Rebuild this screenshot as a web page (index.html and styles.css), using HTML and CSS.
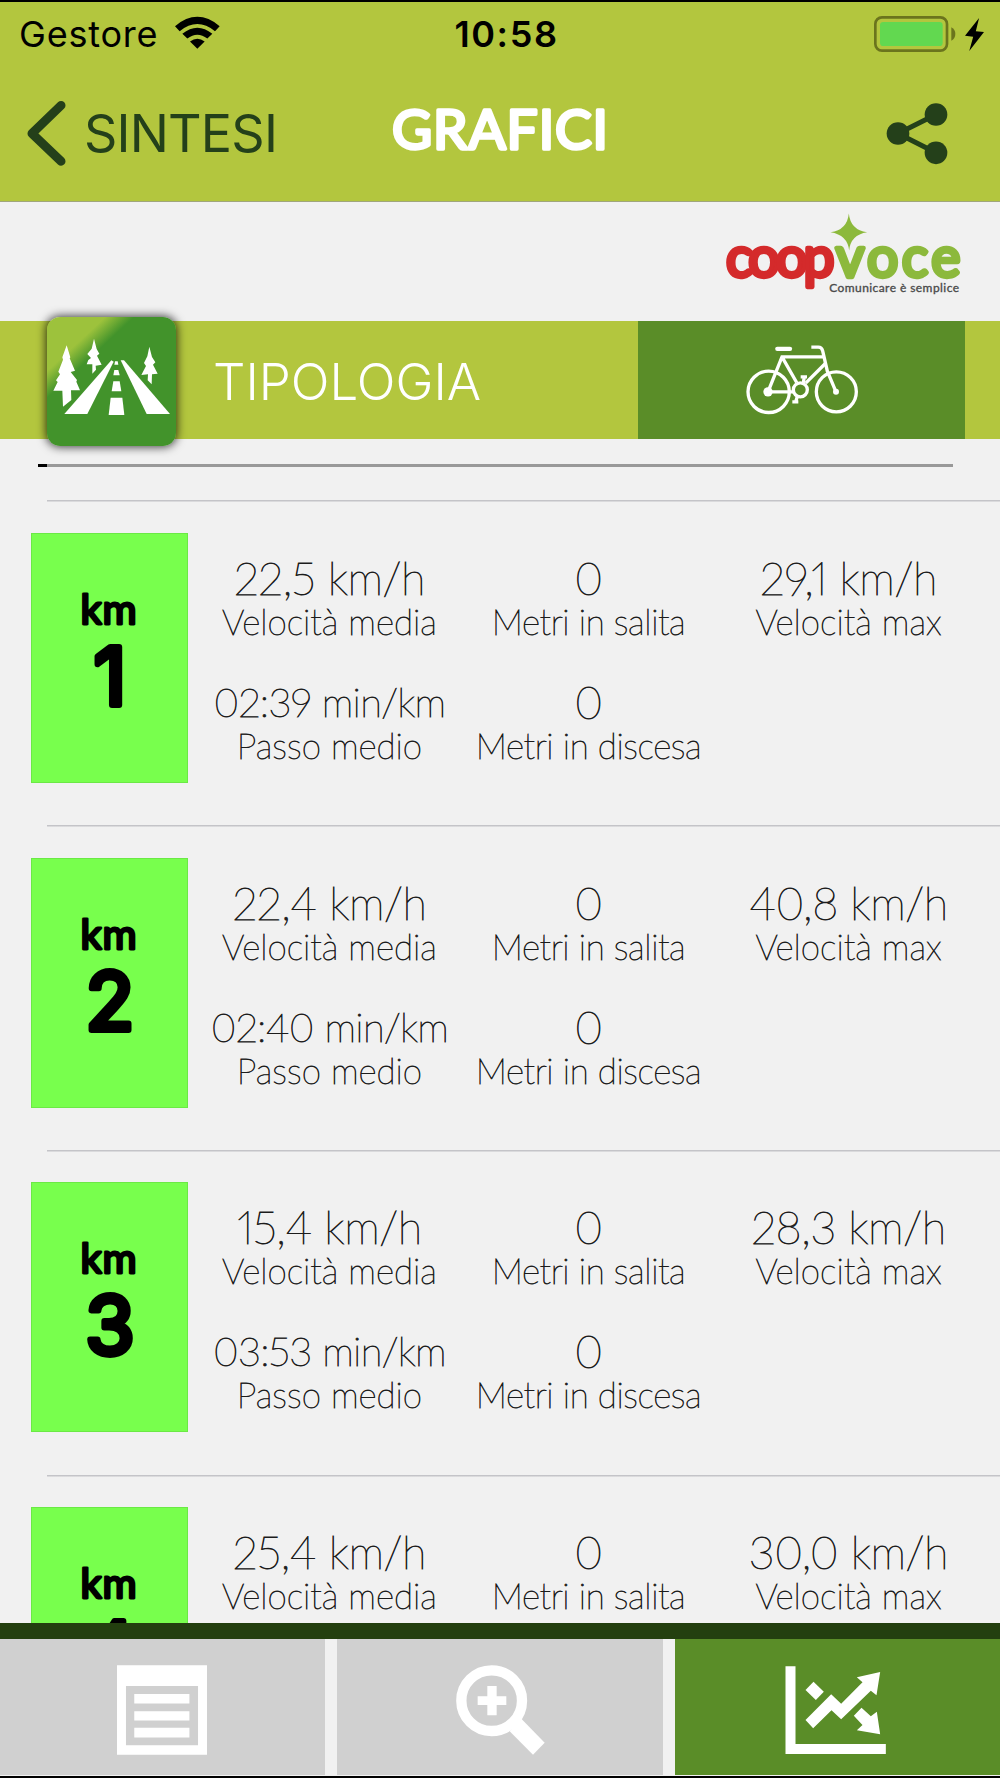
FILE: index.html
```html
<!DOCTYPE html>
<html lang="it">
<head>
    <meta charset="UTF-8">
    <title>Grafici</title>
    <link rel="stylesheet" href="styles.css">
</head>
<body>
    <header class="header">
        <div class="status-bar">
            <div class="carrier">
                <span>Gestore</span>
                <svg class="wifi" viewBox="524 48 135 98">
                    <path d="M524 78 Q591 22 658 78 L644 93 Q591 50 538 93 Z"/>
                    <path d="M546 101 Q591 64 636 101 L621 115 Q591 92 561 115 Z"/>
                    <path d="M569 124 Q591 108 613 124 L591 146 Z"/>
                </svg>
            </div>
            <span class="clock">10:58</span>
            <div class="power">
                <svg class="battery" viewBox="1124 44 246 108">
                    <rect x="1128" y="48" width="215" height="100" rx="20" fill="none" stroke="#6b741d" stroke-width="8"/>
                    <rect x="1142" y="62" width="188" height="72" rx="10" fill="#62d850"/>
                    <path d="M1356 78 Q1368 84 1368 98 Q1368 112 1356 118 Z" fill="#6b741d"/>
                </svg>
                <svg class="bolt" viewBox="1396 50 58 100">
                    <path d="M1439 50 L1396 104 L1421 107 L1409 150 L1454 92 L1429 90 Z"/>
                </svg>
            </div>
        </div>
        <div class="nav-bar">
            <a class="back">
                <svg viewBox="82 300 118 200">
                    <path d="M185 315 L97 400 L185 484" fill="none" stroke="#24401a" stroke-width="27" stroke-linecap="round" stroke-linejoin="round"/>
                </svg>
                <span>SINTESI</span>
            </a>
            <svg class="title" viewBox="0 0 228 74">
                <text x="6" y="56" textLength="216">GRAFICI</text>
            </svg>
            <svg class="share" viewBox="1158 305 186 188">
                <path d="M1308 342 L1194 399 L1308 457" fill="none" stroke="#24401a" stroke-width="15"/>
                <circle cx="1194" cy="399" r="34"/>
                <circle cx="1308" cy="342" r="34"/>
                <circle cx="1308" cy="457" r="34"/>
            </svg>
        </div>
    </header>

    <div class="sponsor">
        <svg class="sponsor-logo" viewBox="75 35 715 260">
            <g class="logo-name">
                <text class="coop" x="78" y="233" textLength="326">coop</text>
                <text class="voce" x="408" y="233" textLength="374">voce</text>
            </g>
            <path d="M447 42 Q452 92 502 98 Q452 106 448 153 Q443 106 392 98 Q442 92 447 42 Z" fill="#8cb93c"/>
            <text class="payoff" x="388" y="278" textLength="390">Comunicare è semplice</text>
        </svg>
    </div>

    <div class="type-bar">
        <svg class="type-icon" viewBox="141 50 387 387">
            <defs>
                <linearGradient id="shine" gradientUnits="userSpaceOnUse" x1="230" y1="130" x2="270" y2="173">
                    <stop offset="0" stop-color="#9dc23c"/>
                    <stop offset="1" stop-color="#42932b"/>
                </linearGradient>
            </defs>
            <rect x="141" y="50" width="387" height="387" fill="url(#shine)"/>
            <g fill="#fff">
                <path d="M334 180 L341 184 L262 341 L193 341 Z"/>
                <path d="M362 180 L372 180 L510 341 L440 341 Z"/>
                <path d="M345 183 H353 L355 193 H343 Z"/>
                <path d="M343 209 H355 L359 225 H340 Z"/>
                <path d="M340 243 H359 L364 273 H335 Z"/>
                <path d="M332 292 H367 L373 344 H326 Z"/>
                <path d="M200 135 L211 171 L209 174 L225 211 L212 215 L231 239 L229 244 L240 270 L213 270 L214 299 L189 319 L187 271 L160 271 L173 245 L168 240 L180 222 L175 214 L189 178 L187 171 Z"/>
                <path d="M282 115 L290 146 L298 160 L291 166 L305 193 L287 196 L288 208 L277 220 L277 192 L260 192 L265 179 L273 173 L262 161 L275 145 Z"/>
                <path d="M448 139 L456 170 L466 186 L459 193 L473 220 L456 222 L455 252 L443 240 L444 222 L424 224 L438 197 L432 188 L442 168 Z"/>
            </g>
        </svg>
        <span class="type-label">TIPOLOGIA</span>
        <div class="type-value">
            <svg class="bike" viewBox="434 132 342 212">
                <circle cx="505" cy="275" r="62"/>
                <circle cx="708" cy="275" r="60"/>
                <circle cx="600" cy="269" r="21"/>
                <path d="M633 141 H654 Q664 141 667 152 L681 213 L707 275"/>
                <path d="M674 170 H545 L503 275 H579 M545 170 L589 247 M675 190 L616 249"/>
                <path d="M609 248 L612 230 M601 230 H620 M591 289 L586 305 M576 305 H594"/>
                <path d="M531 146 H569" stroke-width="13" stroke-linecap="round"/>
                <circle class="hub" cx="503" cy="275" r="14"/>
                <circle class="hub" cx="707" cy="275" r="9"/>
            </svg>
        </div>
    </div>

    <main class="splits">
        <hr class="rule">

        <section class="split">
            <svg class="km" viewBox="0 0 157 250">
                <text class="km-unit" x="78" y="91">km</text>
                <text class="km-number" x="79" y="173">1</text>
            </svg>
            <div class="stats">
                <div class="stat"><b>22,5 km/h</b><span>Velocità media</span></div>
                <div class="stat"><b>0</b><span class="climb">Metri in salita</span></div>
                <div class="stat"><b>29,1 km/h</b><span>Velocità max</span></div>
                <div class="stat low"><b class="pace">02:39 min/km</b><span>Passo medio</span></div>
                <div class="stat low"><b>0</b><span class="climb">Metri in discesa</span></div>
            </div>
        </section>

        <section class="split">
            <svg class="km" viewBox="0 0 157 250">
                <text class="km-unit" x="78" y="91">km</text>
                <text class="km-number" x="79" y="173">2</text>
            </svg>
            <div class="stats">
                <div class="stat"><b>22,4 km/h</b><span>Velocità media</span></div>
                <div class="stat"><b>0</b><span class="climb">Metri in salita</span></div>
                <div class="stat"><b>40,8 km/h</b><span>Velocità max</span></div>
                <div class="stat low"><b class="pace">02:40 min/km</b><span>Passo medio</span></div>
                <div class="stat low"><b>0</b><span class="climb">Metri in discesa</span></div>
            </div>
        </section>

        <section class="split">
            <svg class="km" viewBox="0 0 157 250">
                <text class="km-unit" x="78" y="91">km</text>
                <text class="km-number" x="79" y="173">3</text>
            </svg>
            <div class="stats">
                <div class="stat"><b>15,4 km/h</b><span>Velocità media</span></div>
                <div class="stat"><b>0</b><span class="climb">Metri in salita</span></div>
                <div class="stat"><b>28,3 km/h</b><span>Velocità max</span></div>
                <div class="stat low"><b class="pace">03:53 min/km</b><span>Passo medio</span></div>
                <div class="stat low"><b>0</b><span class="climb">Metri in discesa</span></div>
            </div>
        </section>

        <section class="split">
            <svg class="km" viewBox="0 0 157 250">
                <text class="km-unit" x="78" y="91">km</text>
                <text class="km-number" x="79" y="173">4</text>
            </svg>
            <div class="stats">
                <div class="stat"><b>25,4 km/h</b><span>Velocità media</span></div>
                <div class="stat"><b>0</b><span class="climb">Metri in salita</span></div>
                <div class="stat"><b>30,0 km/h</b><span>Velocità max</span></div>
            </div>
        </section>
    </main>

    <nav class="tabs">
        <a class="tab">
            <svg width="90" height="90" viewBox="350 196 271 269">
                <path fill-rule="evenodd" d="M350 196 H621 V465 H350 Z M377 258 V437 H594 V258 Z"/>
                <path d="M402 282 H568 V311 H402 Z M402 334 H568 V362 H402 Z M402 384 H568 V413 H402 Z"/>
            </svg>
        </a>
        <a class="tab">
            <svg class="zoom" width="89" height="90" viewBox="-131 195 267 270">
                <circle cx="-24" cy="302" r="91" fill="none" stroke="#fff" stroke-width="31"/>
                <path d="M-66 289 H-37 V258 H-9 V289 H20 V315 H-9 V346 H-37 V315 H-66 Z"/>
                <path d="M65 356 L135 428 L100 464 L30 394 Z"/>
            </svg>
        </a>
        <a class="tab active">
            <svg class="chart" width="101" height="88" viewBox="855 201 302 264">
                <path d="M856 202 H886 V435 H1157 V465 H856 Z"/>
                <path d="M940 248 L971 278 L947 303 L916 273 Z"/>
                <path d="M916 363 L993 286 L1023 314 L1087 250 L1070 235 L1140 219 L1129 289 L1112 275 L1023 361 L994 334 L939 388 Z"/>
                <path d="M1084 326 L1112 352 L1130 338 L1140 406 L1070 394 L1087 378 L1061 350 Z"/>
            </svg>
        </a>
    </nav>
</body>
</html>
```
FILE: styles.css
```css
* {
    box-sizing: border-box;
}

body {
    margin: 0;
    height: 1778px;
    display: flex;
    flex-direction: column;
    overflow: hidden;
    background-color: #f1f1f1;
    border-top: 2px solid #000;
    border-bottom: 2px solid #000;
    font-family: Inter, "Liberation Sans", sans-serif;
    color: #000;
}

svg {
    display: block;
    flex: none;
}

/* header */
.header {
    flex: none;
    height: 200px;
    background-color: #b3c63e;
    border-bottom: 1px solid #a0a67c;
}

.status-bar {
    display: grid;
    grid-template-columns: 1fr auto 1fr;
    align-items: center;
    height: 64px;
    padding: 0 16px 0 19px;
    font-size: 36px;
}

.carrier {
    display: flex;
    align-items: center;
    gap: 17px;
    letter-spacing: 0.8px;
}

.wifi {
    width: 45px;
    height: 33px;
    margin-top: -3px;
}

.clock {
    font-weight: 600;
    letter-spacing: 1.6px;
    margin-left: 10px;
}

.power {
    display: flex;
    align-items: center;
    justify-content: flex-end;
    gap: 9px;
}

.battery {
    width: 82px;
    height: 36px;
}

.bolt {
    width: 19px;
    height: 33px;
}

.nav-bar {
    display: grid;
    grid-template-columns: 1fr 228px 1fr;
    align-items: center;
    height: 134px;
    padding: 0 52px 0 27px;
    fill: #24401a;
}

.back {
    display: flex;
    align-items: center;
    gap: 18px;
    color: #24401a;
    font-size: 52px;
    letter-spacing: -0.8px;
}

.back svg {
    width: 39px;
    height: 67px;
}

.title {
    width: 228px;
    height: 74px;
    margin-left: 12px;
    margin-top: -6px;
    font-family: Lato, sans-serif;
    font-size: 55px;
    font-weight: 400;
    fill: #fff;
    stroke: #fff;
    stroke-width: 3.4px;
    stroke-linejoin: round;
}

.share {
    width: 62px;
    height: 63px;
    justify-self: end;
}

/* sponsor */
.sponsor {
    flex: none;
    height: 119px;
    display: flex;
    justify-content: flex-end;
    align-items: flex-start;
    padding: 9px 37px 0 0;
}

.sponsor-logo {
    width: 238px;
    height: 87px;
    font-family: Lato, sans-serif;
}

.logo-name {
    font-size: 166px;
    font-weight: 400;
    stroke-width: 13px;
    stroke-linejoin: round;
}

.coop {
    fill: #d42a2b;
    stroke: #d42a2b;
}

.voce {
    fill: #8cb93c;
    stroke: #8cb93c;
}

.payoff {
    fill: #4a4a4a;
    stroke: #4a4a4a;
    stroke-width: 1px;
    font-size: 36px;
    font-weight: 400;
}

/* activity type */
.type-bar {
    flex: none;
    height: 118px;
    display: flex;
    align-items: center;
    padding-left: 47px;
    padding-right: 35px;
    background-color: #b3c63e;
}

.type-icon {
    width: 129px;
    height: 129px;
    margin-top: 2px;
    border-radius: 13px;
    box-shadow: 0 0 10px 1px rgba(0, 0, 0, 0.75);
}

.type-label {
    margin-left: 37px;
    margin-top: 3px;
    color: #fff;
    font-size: 51px;
    font-weight: 300;
}

.type-value {
    width: 327px;
    height: 100%;
    margin-left: auto;
    display: flex;
    align-items: center;
    justify-content: center;
    background-color: #5a8d28;
}

.bike {
    width: 114px;
    height: 71px;
    margin-top: -2px;
    fill: none;
    stroke: #fff;
    stroke-width: 10px;
}

.hub {
    fill: #fff;
    stroke: none;
}

/* splits */
.splits {
    flex: 1;
    min-height: 0;
    overflow: hidden;
}

.rule {
    height: 3px;
    margin: 25px 47px 33px 38px;
    border: none;
    background: linear-gradient(to right, #000 9px, #999 9px);
}

.split {
    display: flex;
    align-items: flex-start;
    height: 324.9px;
    padding: 32.7px 0 0 31px;
    background: linear-gradient(#c4c4c8, #c4c4c8) 47px 0 / 100% 1.5px no-repeat;
}

.km {
    width: 157px;
    height: 250px;
    background-color: #78ff4d;
    border: 1px solid #6be945;
    text-anchor: middle;
    stroke: #000;
    stroke-linejoin: round;
}

.km-unit {
    font-family: Lato, sans-serif;
    font-size: 42px;
    font-weight: 400;
    letter-spacing: 1px;
    stroke-width: 2.8px;
}

.km-number {
    font-size: 81px;
    font-weight: 400;
    stroke-width: 6px;
}

.stats {
    display: grid;
    grid-template-columns: 259px 259px 261px;
    margin-left: 12px;
    padding-top: 20px;
    font-family: Lato, sans-serif;
    font-variant-numeric: proportional-nums;
    -webkit-text-stroke: 0.8px #1c1c1c;
}

.stat {
    height: 124px;
    display: flex;
    flex-direction: column;
    align-items: center;
    white-space: nowrap;
    color: #1c1c1c;
}

.stat b {
    height: 50px;
    line-height: 50px;
    font-size: 45px;
    font-weight: 100;
    letter-spacing: -0.4px;
}

.stat span {
    height: 36px;
    line-height: 36px;
    font-size: 35px;
    font-weight: 100;
}

.stat .climb {
    letter-spacing: -0.4px;
}

.low .pace {
    font-size: 40px;
    letter-spacing: -0.7px;
}

/* bottom tabs */
.tabs {
    flex: none;
    height: 153px;
    display: grid;
    grid-template-columns: repeat(3, 1fr);
    gap: 12px;
    border-top: 16px solid #233f0f;
    border-bottom: 1px solid #f1f1f1;
}

.tab {
    display: flex;
    align-items: center;
    justify-content: center;
    padding-top: 5px;
    padding-right: 2px;
    background-color: #d0d0d0;
    fill: #fff;
}

.zoom {
    margin-left: 4px;
}

.active {
    padding-right: 4px;
    background-color: #5a8d28;
}
```
